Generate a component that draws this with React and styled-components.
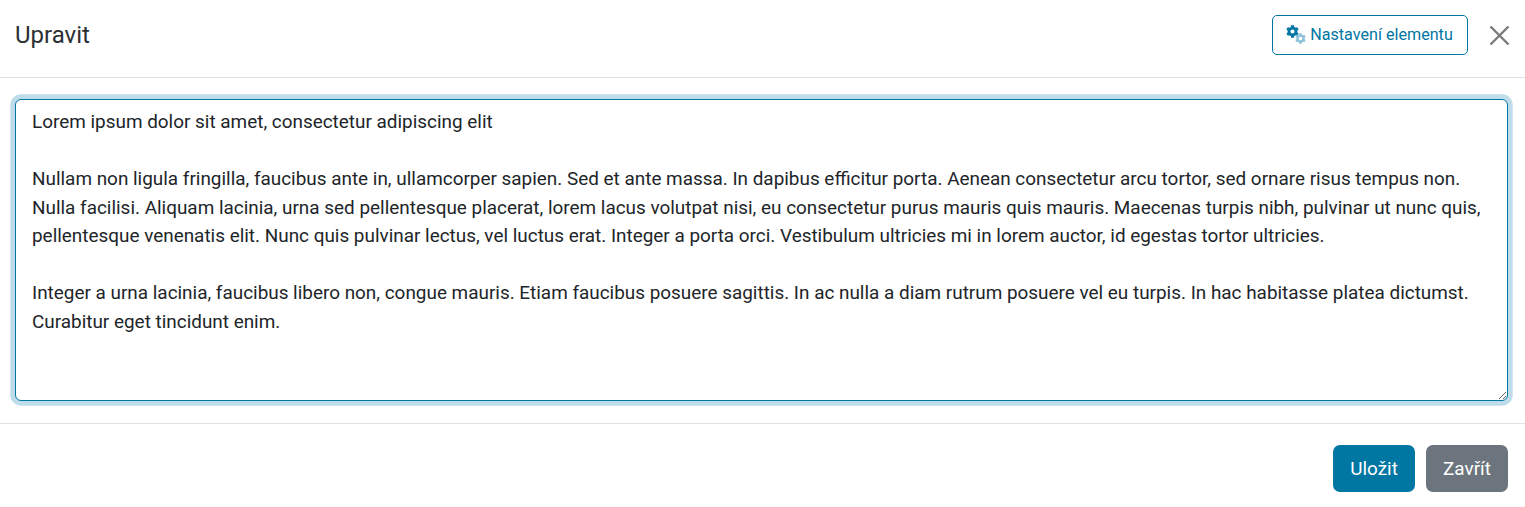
import * as React from 'react'
import styled, { createGlobalStyle } from 'styled-components'
import { FaCog } from 'react-icons/fa'

const GlobalStyle = createGlobalStyle`
  html, body {
    margin: 0;
    padding: 0;
    background: #fff;
  }
  * {
    box-sizing: border-box;
  }
`

const Modal = styled.div`
  width: 1525px;
  height: 507px;
  overflow: hidden;
  display: flex;
  flex-direction: column;
  background: #fff;
  color: #212529;
  font-family: Roboto, 'Liberation Sans', sans-serif;
`

const Header = styled.header`
  height: 78px;
  flex: none;
  display: flex;
  align-items: center;
  padding: 0 14px 8px 15px;
  border-bottom: 1px solid #dee2e6;
`

const Title = styled.h5`
  flex: 1;
  margin: 0;
  font-size: 24px;
  font-weight: 400;
  line-height: 28px;
  color: #2b3035;
`

const SettingsButton = styled.button`
  height: 40px;
  width: 196px;
  display: flex;
  align-items: center;
  justify-content: center;
  gap: 4px;
  padding: 0 2px 0 0;
  margin-right: 20px;
  background: #fff;
  border: 1px solid #0076a3;
  border-radius: 5px;
  color: #0076a3;
  font: inherit;
  font-size: 16.15px;
`

const CloseButton = styled.button`
  width: 23px;
  height: 23px;
  display: flex;
  padding: 0;
  margin-top: 2px;
  background: none;
  border: 0;
  color: #7a7a7a;
`

const Body = styled.div`
  height: 346px;
  flex: none;
  padding: 21px 17px 22px 15px;
  border-bottom: 1px solid #dee2e6;
`

const Editor = styled.textarea`
  display: block;
  width: 100%;
  height: 302px;
  padding: 8px 16px;
  background: #fff;
  border: 1px solid #0076a3;
  border-radius: 6px;
  box-shadow: 0 0 0 4.72px #bedcea;
  outline: none;
  resize: vertical;
  color: #212529;
  font-family: inherit;
  font-size: 18.91px;
  line-height: 28.5px;
`

const Footer = styled.footer`
  flex: 1;
  display: flex;
  justify-content: flex-end;
  gap: 11px;
  padding: 21px 17px 0 0;
`

const ActionButton = styled.button`
  width: 82px;
  height: 47px;
  padding: 0;
  border: 0;
  border-radius: 7px;
  background: ${(p) => (p.$secondary ? '#6c757d' : '#0076a3')};
  color: #fff;
  font: inherit;
  font-size: 18.91px;
  font-weight: 450;
`

const GearsIcon = () => (
  <svg width="21" height="20" viewBox="0 0 21 20" aria-hidden="true">
    <FaCog x="1" y="0" size="13" color="#0076a3" />
    <FaCog x="10" y="8" size="11" color="#8fc3d9" />
  </svg>
)

const text = `Lorem ipsum dolor sit amet, consectetur adipiscing elit

Nullam non ligula fringilla, faucibus ante in, ullamcorper sapien. Sed et ante massa. In dapibus efficitur porta. Aenean consectetur arcu tortor, sed ornare risus tempus non. Nulla facilisi. Aliquam lacinia, urna sed pellentesque placerat, lorem lacus volutpat nisi, eu consectetur purus mauris quis mauris. Maecenas turpis nibh, pulvinar ut nunc quis, pellentesque venenatis elit. Nunc quis pulvinar lectus, vel luctus erat. Integer a porta orci. Vestibulum ultricies mi in lorem auctor, id egestas tortor ultricies.

Integer a urna lacinia, faucibus libero non, congue mauris. Etiam faucibus posuere sagittis. In ac nulla a diam rutrum posuere vel eu turpis. In hac habitasse platea dictumst. Curabitur eget tincidunt enim.`

export default function App() {
  return (
    <>
      <GlobalStyle />
      <Modal>
        <Header>
          <Title>Upravit</Title>
          <SettingsButton>
            <GearsIcon />
            Nastavení elementu
          </SettingsButton>
          <CloseButton aria-label="Close">
            <svg width="23" height="23" viewBox="0 0 23 23">
              <path d="M2.5 2.5l18 18M20.5 2.5l-18 18" stroke="currentColor" strokeWidth="2.4" />
            </svg>
          </CloseButton>
        </Header>
        <Body>
          <Editor defaultValue={text} spellCheck={false} />
        </Body>
        <Footer>
          <ActionButton>Uložit</ActionButton>
          <ActionButton $secondary>Zavřít</ActionButton>
        </Footer>
      </Modal>
    </>
  )
}
